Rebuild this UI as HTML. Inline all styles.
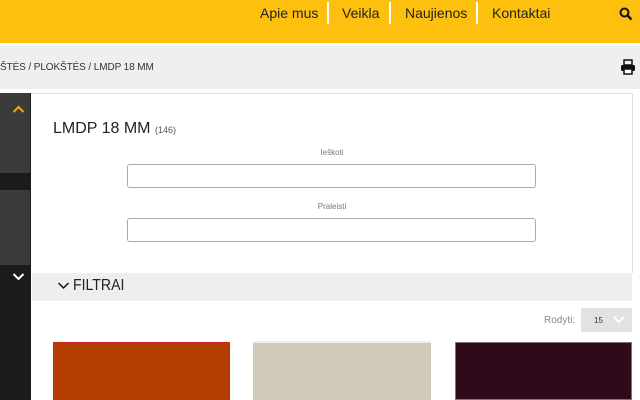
<!DOCTYPE html>
<html><head><meta charset="utf-8"><style>
*{margin:0;padding:0;box-sizing:border-box}
body{width:640px;height:400px;overflow:hidden;background:#fff;font-family:"Liberation Sans",sans-serif;position:relative;color:#222}
.a{position:absolute}
.hdr{left:0;top:0;width:640px;height:43px;background:#fdc00f}
.nav{top:5px;font-size:14px;color:#222}
.sep{top:2px;width:2px;height:22px;background:#fff}
.bc{left:0;top:46px;width:640px;height:43px;background:#efefef}
.lbl{font-size:8px;color:#777;width:100%;text-align:center}
.inp{border:1px solid #aaa;border-radius:3px;background:#fff}
</style></head><body>
<div class="a hdr"></div>
<div class="a nav" style="left:260px">Apie mus</div>
<div class="a sep" style="left:327px"></div>
<div class="a nav" style="left:342px">Veikla</div>
<div class="a sep" style="left:389px"></div>
<div class="a nav" style="left:405px">Naujienos</div>
<div class="a sep" style="left:476px"></div>
<div class="a nav" style="left:492px">Kontaktai</div>
<svg class="a" style="left:619px;top:7px" width="14" height="14" viewBox="0 0 14 14"><circle cx="5.5" cy="5.5" r="4" fill="none" stroke="#111" stroke-width="2"/><path d="M8.5 8.5L12.5 12.5" stroke="#111" stroke-width="2.4"/></svg>
<div class="a bc"></div>
<div class="a" style="left:0;top:62px;font-size:10px;color:#333;letter-spacing:-0.1px">ŠTĖS / PLOKŠTĖS / LMDP 18 MM</div>
<svg class="a" style="left:620px;top:59px" width="16" height="16" viewBox="0 0 16 16"><rect x="4" y="1" width="8" height="5" fill="none" stroke="#111" stroke-width="1.5"/><rect x="1" y="6" width="14" height="6" rx="1.5" fill="#111"/><rect x="4" y="10" width="8" height="5" fill="#fff" stroke="#111" stroke-width="1.5"/></svg>
<div class="a" style="left:30px;top:93px;width:603px;height:180px;border:1px solid #ddd;border-bottom:none;border-left:none"></div>
<div class="a" style="left:0;top:93px;width:31px;height:307px;background:#1b1b1b"></div>
<div class="a" style="left:0;top:93px;width:30px;height:80px;background:#3b3b3b"></div>
<div class="a" style="left:0;top:190px;width:30px;height:75px;background:#3b3b3b"></div>
<svg class="a" style="left:12px;top:105px" width="13" height="9" viewBox="0 0 13 9"><path d="M1.5 7L6.5 2L11.5 7" fill="none" stroke="#f5a800" stroke-width="2"/></svg>
<svg class="a" style="left:12px;top:272px" width="13" height="9" viewBox="0 0 13 9"><path d="M1.5 2L6.5 7L11.5 2" fill="none" stroke="#fff" stroke-width="2"/></svg>
<div class="a" style="left:53px;top:120px;font-size:16px;color:#222">LMDP 18 MM <span style="font-size:9px;color:#555">(146)</span></div>
<div class="a lbl" style="left:32px;width:600px;top:148px">Ieškoti</div>
<div class="a inp" style="left:127px;top:164px;width:409px;height:24px"></div>
<div class="a lbl" style="left:32px;width:600px;top:202px">Praleisti</div>
<div class="a inp" style="left:127px;top:218px;width:409px;height:24px"></div>
<div class="a" style="left:32px;top:273px;width:600px;height:28px;background:#eee"></div>
<svg class="a" style="left:57px;top:281px" width="13" height="9" viewBox="0 0 13 9"><path d="M1.5 2L6.5 7L11.5 2" fill="none" stroke="#111" stroke-width="1.5"/></svg>
<div class="a" style="left:73px;top:277px;font-size:16px;color:#222;transform:scaleX(0.88);transform-origin:left">FILTRAI</div>
<div class="a" style="left:544px;top:315px;font-size:10px;color:#888">Rodyti:</div>
<div class="a" style="left:581px;top:308px;width:51px;height:24px;background:#e2e2e2"></div>
<div class="a" style="left:594px;top:316px;font-size:8px;color:#333">15</div>
<svg class="a" style="left:612px;top:315px" width="14" height="10" viewBox="0 0 14 10"><path d="M2 2L7 7L12 2" fill="none" stroke="#fff" stroke-width="2"/></svg>
<div class="a" style="left:53px;top:342px;width:177px;height:58px;background:#b43e02;border:1px solid #c22"></div>
<div class="a" style="left:253px;top:341px;width:178px;height:59px;background:#d0c9b7;border-top:2px solid #eee"></div>
<div class="a" style="left:455px;top:342px;width:177px;height:58px;background:#2e0a1a;border:1px solid #777"></div>
</body></html>
